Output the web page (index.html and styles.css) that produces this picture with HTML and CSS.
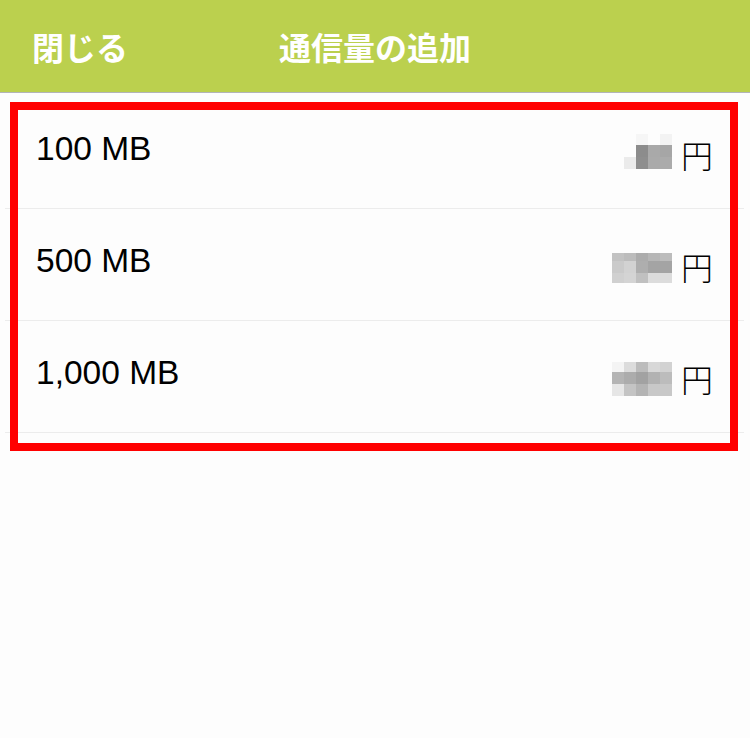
FILE: index.html
```html
<!DOCTYPE html>
<html lang="ja">
<head>
  <meta charset="UTF-8">
  <meta name="viewport" content="width=device-width, initial-scale=1.0">
  <title>通信量の追加</title>
  <link rel="stylesheet" href="styles.css">
</head>
<body>
  <header class="navbar">
    <a href="#" class="nav-close">閉じる</a>
    <h1 class="nav-title">通信量の追加</h1>
    <span></span>
  </header>

  <main class="content">
    <ul class="plans">
      <li class="plan">
        <span class="plan-name">100 MB</span>
        <span class="price">
          <span class="mosaic mosaic-a">
            <i></i><i style="background:#f6f6f6"></i><i></i><i style="background:#f3f3f3"></i>
            <i></i><i style="background:#8c8c8c"></i><i style="background:#a9a9a9"></i><i style="background:#a6a6a6"></i>
            <i style="background:#ebebeb"></i><i style="background:#8e8e8e"></i><i style="background:#aaaaaa"></i><i style="background:#ababab"></i>
          </span>
          <span class="yen">円</span>
        </span>
      </li>
      <li class="plan">
        <span class="plan-name">500 MB</span>
        <span class="price">
          <span class="mosaic mosaic-b">
            <i style="background:#c2c2c2"></i><i style="background:#bcbcbc"></i><i style="background:#acacac"></i><i style="background:#b6b6b6"></i><i style="background:#bcbcbc"></i>
            <i style="background:#cacaca"></i><i style="background:#d2d2d2"></i><i style="background:#aeaeae"></i><i style="background:#a4a4a4"></i><i style="background:#a4a4a4"></i>
            <i style="background:#d0d0d0"></i><i style="background:#d4d4d4"></i><i style="background:#c0c0c0"></i><i style="background:#dcdcdc"></i><i style="background:#dcdcdc"></i>
          </span>
          <span class="yen">円</span>
        </span>
      </li>
      <li class="plan">
        <span class="plan-name">1,000 MB</span>
        <span class="price">
          <span class="mosaic mosaic-c">
            <i style="background:#f4f4f4"></i><i style="background:#dcdcdc"></i><i style="background:#bcbcbc"></i><i style="background:#d8d8d8"></i><i style="background:#d2d2d2"></i>
            <i style="background:#b4b4b4"></i><i style="background:#acacac"></i><i style="background:#a2a2a2"></i><i style="background:#b2b2b2"></i><i style="background:#bcbcbc"></i>
            <i style="background:#e6e6e6"></i><i style="background:#c4c4c4"></i><i style="background:#b4b4b4"></i><i style="background:#c8c8c8"></i><i style="background:#c8c8c8"></i>
          </span>
          <span class="yen">円</span>
        </span>
      </li>
    </ul>
    <div class="highlight"></div>
  </main>
</body>
</html>
```

FILE: styles.css
```css
* {
  box-sizing: border-box;
  margin: 0;
  padding: 0;
}
body {
  font-family: "Liberation Sans", "Noto Sans CJK JP", sans-serif;
  background-color: #fdfdfd;
  color: #000;
  width: 750px;
  height: 738px;
  overflow: hidden;
}
.navbar {
  height: 93px;
  background-color: #bbd04e;
  border-bottom: 1px solid #b2b4b8;
  display: grid;
  grid-template-columns: 1fr auto 1fr;
  align-items: center;
  font-family: "Noto Sans CJK JP", sans-serif;
  font-weight: bold;
  font-size: 32px;
  color: #fff;
}
.nav-close {
  color: #fff;
  text-decoration: none;
  padding-left: 32px;
  justify-self: start;
}
.nav-title {
  font-size: 32px;
  font-weight: bold;
}
.content {
  position: relative;
}
.plans {
  list-style: none;
  padding-top: 4px;
}
.plan {
  height: 112px;
  margin: 0 6px 0 5px;
  border-bottom: 1px solid #ececec;
  display: flex;
  justify-content: space-between;
  align-items: center;
  padding: 0 31px 0 31px;
}
.plan-name {
  align-self: flex-start;
  padding-top: 34px;
  font-size: 33.5px;
  line-height: 36px;
}
.price {
  display: flex;
  align-items: center;
  gap: 9px;
  margin-top: 3px;
}
.mosaic {
  display: grid;
  grid-template-columns: repeat(5, 12px);
  grid-template-rows: 11px 12px 12px;
}
.mosaic-a {
  grid-template-columns: repeat(4, 12px);
  margin-top: -6px;
}
.mosaic-b {
  grid-template-rows: 8px 12px 10px;
  margin-top: 4px;
}
.mosaic-c {
  grid-template-rows: 10px 12px 12px;
  margin-top: 2px;
}
.mosaic i {
  display: block;
}
.yen {
  font-family: "Noto Sans CJK JP", sans-serif;
  font-weight: 300;
  font-size: 32px;
  line-height: 40px;
}
.highlight {
  position: absolute;
  left: 10px;
  top: 9px;
  width: 728px;
  height: 349px;
  border: 8px solid #ff0000;
  pointer-events: none;
}
```
